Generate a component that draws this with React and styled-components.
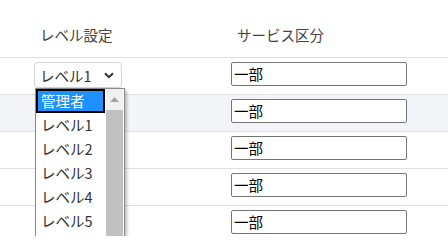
import React from 'react'
import styled, { createGlobalStyle } from 'styled-components'

const GlobalStyle = createGlobalStyle`
  html, body {
    margin: 0;
    padding: 0;
    background: #fff;
    overflow: hidden;
  }
  body {
    font-family: "Noto Sans CJK JP", "Noto Sans", sans-serif;
    color: #333;
  }
`

const Table = styled.div`
  display: grid;
  grid-template-columns: 28px 197px 1fr;
  width: 448px;
  height: 236px;
  overflow: hidden;
`

const HeadCell = styled.div`
  height: 58px;
  box-sizing: border-box;
  border-bottom: 1px solid #e0e0e0;
  display: flex;
  align-items: flex-end;
  padding: 0 0 12px 12px;
  font-size: 14.5px;
  line-height: 20px;
  color: #444;
`

const Cell = styled.div`
  height: 37px;
  box-sizing: border-box;
  border-bottom: 1px solid #e0e0e0;
  background: ${p => (p.$striped ? '#f3f4f8' : '#fff')};
  padding: 4px 0 0 6px;
  position: relative;
`

const SelectWrap = styled.div`
  position: relative;
  width: 88px;
`

const SelectBox = styled.div`
  width: 88px;
  height: 26px;
  box-sizing: border-box;
  border: 1px solid #d4d4d4;
  border-radius: 4px;
  background: #fff;
  display: flex;
  align-items: center;
  justify-content: space-between;
  padding: 0 7px 0 5px;
  font-size: 14.5px;
  color: #333;
`

const TextInput = styled.div`
  width: 176px;
  height: 24px;
  box-sizing: border-box;
  border: 1px solid #767676;
  border-radius: 2px;
  background: #fff;
  padding: 0 2px;
  font-size: 14.5px;
  line-height: 22px;
  color: #000;
`

const ListBox = styled.div`
  position: absolute;
  top: 26px;
  left: 1px;
  width: 90px;
  height: 152px;
  box-sizing: border-box;
  border: 1px solid #8a8a8a;
  background: #fff;
  display: flex;
  padding: 0 1px 0 0;
  box-shadow: 2px 2px 3px rgba(0, 0, 0, 0.25);
  z-index: 5;
`

const Options = styled.div`
  flex: 1;
  display: flex;
  flex-direction: column;
`

const Option = styled.div`
  height: 24px;
  box-sizing: border-box;
  padding-left: ${p => (p.$selected ? '3px' : '5px')};
  font-size: 14.5px;
  line-height: ${p => (p.$selected ? '20px' : '24px')};
  color: ${p => (p.$selected ? '#fff' : '#333')};
  background: ${p => (p.$selected ? '#1e90ff' : 'transparent')};
  border: ${p => (p.$selected ? '2px solid #000' : 'none')};
`

const Scrollbar = styled.div`
  width: 17px;
  margin-left: 1px;
  display: flex;
  flex-direction: column;
  background: #f0f0f0;
`

const ArrowButton = styled.div`
  height: 21px;
  display: flex;
  align-items: center;
  justify-content: center;
`

const Thumb = styled.div`
  flex: 1;
  background: #c1c1c1;
`

const Chevron = () => (
  <svg width="10" height="7" viewBox="0 0 10 7">
    <path d="M1 1.2 L5 5.2 L9 1.2" fill="none" stroke="#333" strokeWidth="2" />
  </svg>
)

const UpArrow = () => (
  <svg width="9" height="5" viewBox="0 0 9 5">
    <path d="M0 5 L4.5 0 L9 5 Z" fill="#a3a3a3" />
  </svg>
)

const levels = ['管理者', 'レベル1', 'レベル2', 'レベル3', 'レベル4', 'レベル5']

export default function App() {
  const rows = [0, 1, 2, 3, 4]
  return (
    <>
      <GlobalStyle />
      <Table>
        <HeadCell />
        <HeadCell>レベル設定</HeadCell>
        <HeadCell>サービス区分</HeadCell>
        {rows.map(i => (
          <React.Fragment key={i}>
            <Cell $striped={i === 1} />
            <Cell $striped={i === 1}>
              {i === 0 && (
                <SelectWrap>
                  <SelectBox>
                    <span>レベル1</span>
                    <Chevron />
                  </SelectBox>
                  <ListBox>
                    <Options>
                      {levels.map((l, n) => (
                        <Option key={l} $selected={n === 0}>{l}</Option>
                      ))}
                    </Options>
                    <Scrollbar>
                      <ArrowButton><UpArrow /></ArrowButton>
                      <Thumb />
                    </Scrollbar>
                  </ListBox>
                </SelectWrap>
              )}
            </Cell>
            <Cell $striped={i === 1}>
              <TextInput>一部</TextInput>
            </Cell>
          </React.Fragment>
        ))}
      </Table>
    </>
  )
}
